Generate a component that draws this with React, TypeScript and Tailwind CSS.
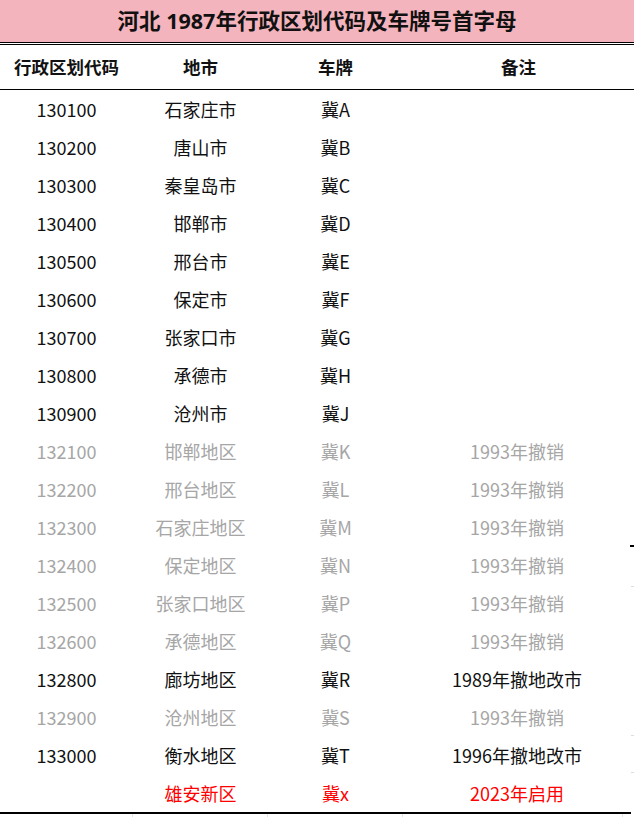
import React from "react";

type Row = { code: string; city: string; plate: string; note: string; tone: "black" | "gray" | "red" };

const rows: Row[] = [
  { code: "130100", city: "石家庄市", plate: "冀A", note: "", tone: "black" },
  { code: "130200", city: "唐山市", plate: "冀B", note: "", tone: "black" },
  { code: "130300", city: "秦皇岛市", plate: "冀C", note: "", tone: "black" },
  { code: "130400", city: "邯郸市", plate: "冀D", note: "", tone: "black" },
  { code: "130500", city: "邢台市", plate: "冀E", note: "", tone: "black" },
  { code: "130600", city: "保定市", plate: "冀F", note: "", tone: "black" },
  { code: "130700", city: "张家口市", plate: "冀G", note: "", tone: "black" },
  { code: "130800", city: "承德市", plate: "冀H", note: "", tone: "black" },
  { code: "130900", city: "沧州市", plate: "冀J", note: "", tone: "black" },
  { code: "132100", city: "邯郸地区", plate: "冀K", note: "1993年撤销", tone: "gray" },
  { code: "132200", city: "邢台地区", plate: "冀L", note: "1993年撤销", tone: "gray" },
  { code: "132300", city: "石家庄地区", plate: "冀M", note: "1993年撤销", tone: "gray" },
  { code: "132400", city: "保定地区", plate: "冀N", note: "1993年撤销", tone: "gray" },
  { code: "132500", city: "张家口地区", plate: "冀P", note: "1993年撤销", tone: "gray" },
  { code: "132600", city: "承德地区", plate: "冀Q", note: "1993年撤销", tone: "gray" },
  { code: "132800", city: "廊坊地区", plate: "冀R", note: "1989年撤地改市", tone: "black" },
  { code: "132900", city: "沧州地区", plate: "冀S", note: "1993年撤销", tone: "gray" },
  { code: "133000", city: "衡水地区", plate: "冀T", note: "1996年撤地改市", tone: "black" },
  { code: "", city: "雄安新区", plate: "冀x", note: "2023年启用", tone: "red" },
];

const toneClass = {
  black: "text-[#111111]",
  gray: "text-[#a6a6a6]",
  red: "text-[#ff0000]",
};

export default function App() {
  return (
    <div
      className="relative w-[634px] h-[817px] bg-white overflow-hidden"
      style={{ fontFamily: '"Noto Sans CJK SC", "Noto Sans", sans-serif' }}
    >
      <div className="h-[42px] bg-[#f4b4bd] flex items-center justify-center">
        <span
          className="text-[21.5px] font-bold text-[#111111] leading-none pb-[1px]"
          style={{ fontFamily: '"Noto Sans", "Noto Sans CJK SC", sans-serif' }}
        >
          河北 1987年行政区划代码及车牌号首字母
        </span>
      </div>
      <div className="h-[1px] bg-black" />
      <div className="h-[1px] bg-white" />
      <div className="h-[1px] bg-black" />
      <div className="grid grid-cols-[133px_135px_135px_1fr] h-[45px] border-b border-black items-center text-[17.5px] font-bold text-[#111111] leading-none">
        <div className="text-center">行政区划代码</div>
        <div className="text-center">地市</div>
        <div className="text-center">车牌</div>
        <div className="text-center">备注</div>
      </div>
      <div className="flex flex-col w-[631px] border-b-2 border-black">
        {rows.map((r, i) => (
          <div
            key={i}
            className={`grid grid-cols-[133px_135px_135px_1fr] h-[38px] items-center text-[18px] leading-none pb-[1px] ${toneClass[r.tone]}`}
          >
            <div className="text-center">{r.code}</div>
            <div className="text-center">{r.city}</div>
            <div className="text-center">{r.plate}</div>
            <div className="text-center">{r.note}</div>
          </div>
        ))}
      </div>
      <div className="grid grid-cols-[133px_135px_135px_220px] h-[5px]">
        <div className="border-r border-[#e4e4e4]" />
        <div className="border-r border-[#e4e4e4]" />
        <div className="border-r border-[#e4e4e4]" />
        <div className="border-r border-[#e4e4e4]" />
      </div>
      <div className="absolute left-[630px] top-[545px] w-[4px] h-[2px] bg-black" />
      <div className="absolute left-[631px] top-[586px] w-[3px] h-[1px] bg-[#dddddd]" />
      <div className="absolute left-[631px] top-[735px] w-[3px] h-[1px] bg-[#dddddd]" />
      <div className="absolute left-[631px] top-[772px] w-[3px] h-[1px] bg-[#dddddd]" />
    </div>
  );
}
